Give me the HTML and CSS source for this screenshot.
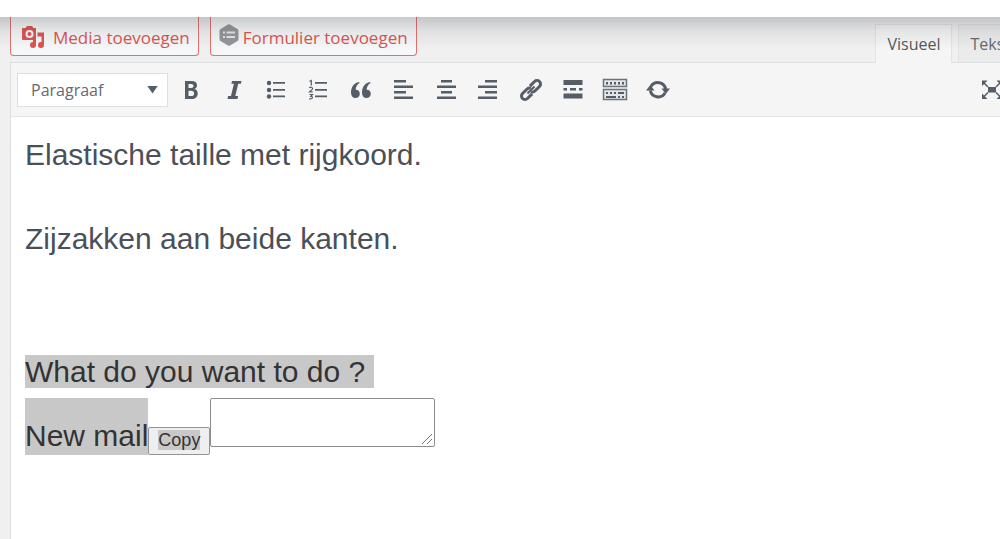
FILE: index.html
```html
<!DOCTYPE html>
<html lang="nl">

<head>
  <meta charset="UTF-8" />
  <meta name="viewport" content="width=device-width, initial-scale=1.0" />
  <title>Editor</title>
  <link rel="stylesheet" href="styles.css">
</head>

<body>
  <header class="topbar"></header>

  <main class="editor">
    <div class="tools">
      <div class="media-buttons">
        <button type="button" class="media-button">
          <svg class="media-icon" width="24" height="24" viewBox="0 0 24 24" fill="currentColor">
            <path fill-rule="evenodd" d="M2 3h2.500l1.500-2h5l1.500 2H15v12H2a1 1 0 0 1-1-1V4a1 1 0 0 1 1-1zM8.500 5a4 4 0 1 0 0 8 4 4 0 1 0 0-8z" />
            <circle cx="8.500" cy="9" r="2" />
            <path d="M16.500 7.500H23V20a3 3 0 1 1-2.500-2.900V11.500h-4z" />
            <path d="M12 14h3v6a3 3 0 1 1-3-3z" />
          </svg>
          Media toevoegen
        </button>
        <button type="button" class="media-button form-button">
          <svg class="form-icon" width="20" height="22" viewBox="0 0 20 22">
            <path d="M9 .6q1-.6 2 0l7.500 4.300q1 .6 1 1.800v8.600q0 1.200-1 1.800L11 21.400q-1 .6-2 0l-7.500-4.300q-1-.6-1-1.800V6.700q0-1.200 1-1.800z" fill="#949698" />
            <path d="M4 7.500h2v2H4zM7.500 7.500H16v2H7.500zM4 12h2v2H4zM7.500 12H16v2H7.500z" fill="#e6e7e8" />
          </svg>
          Formulier toevoegen
        </button>
      </div>
      <div class="tabs">
        <button type="button" class="tab active">Visueel</button>
        <button type="button" class="tab">Tekst</button>
      </div>
    </div>

    <div class="panel">
      <div class="toolbar">
        <div class="format-box">
          <select class="format" aria-label="Opmaak">
            <option>Paragraaf</option>
          </select>
        </div>
        <div class="buttons">
          <button type="button" class="tool" aria-label="Vet">
            <svg width="24" height="24" viewBox="0 0 24 24">
              <path fill="currentColor" fill-rule="evenodd" d="M6 3h6.500c3.600 0 5.500 1.500 5.500 4.300 0 2-1 3.300-2.700 3.800 2.200.5 3.400 2 3.400 4.300 0 3.400-2.300 5.600-6.200 5.600H6zM9.500 6v4h2.500c1.700 0 2.500-.7 2.500-2s-.8-2-2.500-2zM9.500 12.800V18h2.800c1.800 0 2.800-.9 2.800-2.600s-1-2.600-2.800-2.600z" />
            </svg>
          </button>
          <button type="button" class="tool" aria-label="Cursief">
            <svg width="24" height="24" viewBox="0 0 24 24">
              <path fill="currentColor" d="M10 3h9.500l-.6 2.700h-2.700L13.300 18h2.800l-.6 3H5.500l.6-3H9l2.900-12.300H9.400z" />
            </svg>
          </button>
          <button type="button" class="tool" aria-label="Opsomming">
            <svg width="24" height="24" viewBox="0 0 24 24" fill="currentColor">
              <circle cx="5" cy="5" r="2.200" /><circle cx="5" cy="12" r="2.200" /><circle cx="5" cy="18.500" r="2.200" />
              <path d="M9 4h12v1.800H9zM9 11h12v1.800H9zM9 17.500h12v1.800H9z" />
            </svg>
          </button>
          <button type="button" class="tool" aria-label="Genummerde lijst">
            <svg width="24" height="24" viewBox="0 0 24 24">
              <path d="M9 4h12v1.800H9zM9 11h12v1.800H9zM9 17.500h12v1.800H9z" fill="currentColor" />
              <path d="M3.500 3.500l1.800-1v5M3.300 10c1-1.300 3.300-.9 3.300.6 0 1.300-1.500 1.900-3.100 3.400h3.300M3.500 16.500h3L4.800 18.300c2.700.2 2.200 3.200-1.600 2.500" fill="none" stroke="currentColor" stroke-width="1.200" />
            </svg>
          </button>
          <button type="button" class="tool" aria-label="Citaat">
            <svg width="24" height="24" viewBox="0 0 24 24" fill="currentColor">
              <path d="M10 4C5 5 2 9 2 14.500 2 18 3.700 20 6.500 20c2.600 0 4.300-1.700 4.300-4.200S9.200 11.700 6.700 11.700C6.700 9 8 6.500 10.500 5z" />
              <path d="M21 4c-5 1-8 5-8 10.500 0 3.500 1.700 5.500 4.500 5.500 2.600 0 4.300-1.700 4.300-4.200s-1.600-4.100-4.100-4.100c0-2.700 1.300-5.200 3.800-6.700z" />
            </svg>
          </button>
          <button type="button" class="tool" aria-label="Links uitlijnen">
            <svg width="24" height="24" viewBox="0 0 24 24" fill="currentColor">
              <path d="M3 2h12v2.500H3zM3 7.500h19V10H3zM3 13h12v2.500H3zM3 18.500h19V21H3z" />
            </svg>
          </button>
          <button type="button" class="tool" aria-label="Centreren">
            <svg width="24" height="24" viewBox="0 0 24 24" fill="currentColor">
              <path d="M7 2h11v2.500H7zM3 7.500h19V10H3zM7 13h11v2.500H7zM3 18.500h19V21H3z" />
            </svg>
          </button>
          <button type="button" class="tool" aria-label="Rechts uitlijnen">
            <svg width="24" height="24" viewBox="0 0 24 24" fill="currentColor">
              <path d="M9 2h12v2.500H9zM2 7.500h19V10H2zM9 13h12v2.500H9zM2 18.500h19V21H2z" />
            </svg>
          </button>
          <button type="button" class="tool" aria-label="Link invoegen">
            <svg width="24" height="24" viewBox="0 0 24 24">
              <g transform="rotate(-45 12 12)" fill="none" stroke="currentColor" stroke-width="3">
                <path d="M10 15.500H3.500a3.500 3.500 0 0 1 0-7H10a3.500 3.500 0 0 1 3.200 2.200" />
                <path d="M14 8.500h6.500a3.500 3.500 0 0 1 0 7H14a3.500 3.500 0 0 1-3.200-2.200" />
                <path d="M7 12h10" stroke-width="2" />
              </g>
            </svg>
          </button>
          <button type="button" class="tool" aria-label="Lees meer">
            <svg width="24" height="24" viewBox="0 0 24 24" fill="currentColor">
              <path d="M2.500 2h19v5h-19zM2.500 10h3.500v2.500H2.500zM9 10h6v2.500H9zM18 10h3.500v2.500H18zM2.500 15.500h19v5h-19z" />
            </svg>
          </button>
          <button type="button" class="tool" aria-label="Toolbar">
            <svg width="26" height="24" viewBox="0 0 26 24">
              <path d="M1.500 1.500h23v7h-23zM1.500 11.500h23v10h-23z" fill="#e4e6e8" stroke="#6b727a" stroke-width="1.500" />
              <path d="M4 4h2v2.500H4zM8 4h2v2.500H8zM12 4h2v2.500h-2zM16 4h2v2.500h-2zM20 4h2v2.500h-2zM4 14h2v2H4zM8 14h2v2H8zM12 14h2v2h-2zM16 14h6v2h-6zM4 18h10v2H4zM16 18h2v2h-2zM20 18h2v2h-2z" fill="currentColor" />
            </svg>
          </button>
          <button type="button" class="tool" aria-label="Vernieuwen">
            <svg width="24" height="24" viewBox="0 0 24 24">
              <path d="M5 8.500a8 8 0 0 1 14.700 2.500M19 15a8 8 0 0 1-14.700-2.500" fill="none" stroke="currentColor" stroke-width="3" />
              <path d="M15.500 10.500H24l-4.300 5.500zM0 12.500h8.500L4.300 7z" fill="currentColor" />
            </svg>
          </button>
        </div>
        <button type="button" class="tool fullscreen" aria-label="Volledig scherm">
          <svg width="24" height="24" viewBox="0 0 24 24" fill="currentColor">
            <path d="M8 9h8v5.500H8zM2 2.500h5.500L2 8zM22 2.500h-5.500L22 8zM2 21h5.500L2 15.500zM22 21h-5.500l5.500-5.500z" />
            <path d="M3 4l5 5M21 4l-5 5M3 19.500l5-5M21 19.500l-5-5" stroke="currentColor" stroke-width="1.500" />
          </svg>
        </button>
      </div>

      <div class="content">
        <p>Elastische taille met rijgkoord.</p>
        <p>Zijzakken aan beide kanten.</p>
        <div class="pasted">
          <div><span class="selected">What do you want to do ?&nbsp;</span></div>
          <div class="mail-row">
            <label class="selected mail-label" for="mail">New mail</label>
            <button type="button" class="copy"><span class="selected">Copy</span></button>
            <div class="mail-box">
              <textarea id="mail" class="mail"></textarea>
              <svg class="grip" width="12" height="12" viewBox="0 0 12 12">
                <path d="M1 11L11 1M6 11l5-5" stroke="#777" />
              </svg>
            </div>
          </div>
        </div>
      </div>
    </div>
  </main>
</body>

</html>
```

FILE: styles.css
```css
* {
  box-sizing: border-box;
}

body {
  margin: 0;
  min-height: 100vh;
  display: flex;
  flex-direction: column;
  overflow: hidden;
  background: #f0f0f1;
  font-family: "Open Sans", "Noto Sans", sans-serif;
}

button {
  margin: 0;
  font-family: inherit;
}

.topbar {
  position: relative;
  z-index: 1;
  height: 17px;
  background: #fff;
}

/* shadow cast over the editor */
.topbar::after {
  content: "";
  position: absolute;
  top: 100%;
  left: 0;
  right: 0;
  height: 32px;
  background: linear-gradient(rgba(40, 44, 52, 0.22), rgba(40, 44, 52, 0.08) 45%, rgba(40, 44, 52, 0));
  pointer-events: none;
}

.editor {
  flex: 1;
  display: flex;
  flex-direction: column;
  margin: 0 -22px 0 10px;
}

.tools {
  display: flex;
  justify-content: space-between;
  height: 45px;
}

.media-buttons {
  display: flex;
  align-items: flex-start;
  gap: 11px;
}

.media-button {
  display: flex;
  align-items: center;
  gap: 8px;
  height: 39px;
  padding: 2px 8px 0 10px;
  border: 1px solid #e2716d;
  border-top: 0;
  border-radius: 0 0 4px 4px;
  background: #f6f7f8;
  color: #dc5550;
  font-size: 17px;
  white-space: nowrap;
}

.form-button {
  gap: 4px;
  padding-left: 8px;
}

.form-icon {
  margin-bottom: 4px;
}

.tabs {
  display: flex;
  gap: 6px;
  padding-top: 7px;
}

.tab {
  height: 38px;
  padding: 0 11px;
  border: 1px solid #e2e3e4;
  border-bottom: 0;
  background: #ebebeb;
  color: #66696d;
  font-size: 16px;
}

.tab.active {
  height: 39px;
  position: relative;
  background: #f5f5f5;
  color: #55585c;
}

.panel {
  flex: 1;
  display: flex;
  flex-direction: column;
  border: 1px solid #dcdfe0;
  border-bottom: 0;
}

.toolbar {
  display: flex;
  align-items: center;
  height: 54px;
  padding: 0 17px 0 6px;
  border-bottom: 1px solid #e6e6e6;
  background: #f5f5f5;
}

.format-box {
  position: relative;
}

/* arrow of the drop-down */
.format-box::after {
  content: "";
  position: absolute;
  top: 13px;
  right: 10px;
  width: 11px;
  height: 8px;
  background: #555d66;
  clip-path: polygon(0 0, 100% 0, 50% 100%);
  pointer-events: none;
}

.format {
  display: block;
  appearance: none;
  width: 151px;
  height: 34px;
  padding: 0 13px;
  border: 1px solid #dedfe0;
  border-radius: 0;
  background: #fff;
  color: #666a6e;
  font-family: inherit;
  font-size: 16px;
}

.buttons {
  display: grid;
  grid-template-columns: repeat(12, 1fr);
  width: 509px;
  margin-left: 2px;
}

.tool {
  display: flex;
  align-items: center;
  justify-content: center;
  height: 34px;
  padding: 0;
  border: 0;
  background: none;
  color: #555d66;
}

.fullscreen {
  margin-left: auto;
}

.content {
  flex: 1;
  padding: 17px 14px;
  background: #fff;
  color: #4a5058;
  font-family: "Liberation Sans", Arial, sans-serif;
  font-size: 30px;
  line-height: 42px;
}

.content p {
  margin: 0 0 42px;
}

.pasted {
  margin-top: 91px;
  color: #333;
}

.selected {
  background: #c8c8c8;
}

.mail-row {
  display: flex;
  align-items: baseline;
  margin-top: 5px;
}

.mail-label {
  padding: 21px 0 2px;
  line-height: 34px;
}

.copy {
  height: 28px;
  padding: 0 9px;
  border: 1px solid #949494;
  border-radius: 2px;
  background: #efefef;
  color: #333;
  font-family: "Liberation Sans", Arial, sans-serif;
  font-size: 18px;
}

.mail-box {
  position: relative;
  align-self: flex-start;
  display: flex;
}

.mail {
  width: 225px;
  height: 49px;
  border: 1px solid #8c8c8c;
  border-radius: 2px;
  background: #fff;
  resize: none;
}

.grip {
  position: absolute;
  right: 2px;
  bottom: 2px;
}
```
